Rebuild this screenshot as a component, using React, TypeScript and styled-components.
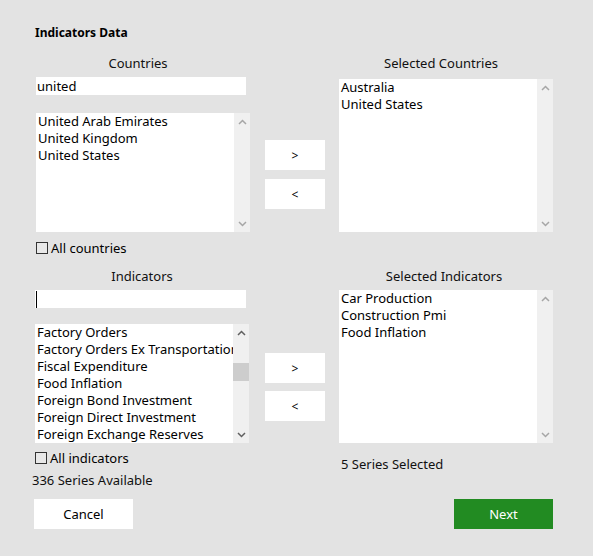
import styled, { createGlobalStyle } from "styled-components";

const GlobalStyle = createGlobalStyle`
  html, body {
    margin: 0;
    padding: 0;
    background: #e3e3e3;
  }
  * {
    box-sizing: border-box;
  }
`;

const Window = styled.div`
  width: 593px;
  height: 556px;
  background: #e3e3e3;
  padding: 25px 40px 0 35px;
  font-family: "Noto Sans", "Open Sans", sans-serif;
  font-size: 13px;
  color: #000;
`;

const Title = styled.div`
  font-weight: 700;
  font-size: 12px;
  height: 16px;
  line-height: 16px;
  margin-bottom: 14px;
`;

const Section = styled.div<{ $top?: number }>`
  display: grid;
  grid-template-columns: 216px 60px 214px;
  column-gap: 14px;
  margin-top: ${(p) => p.$top ?? 0}px;
`;

const Column = styled.div<{ $indent?: number }>`
  display: flex;
  flex-direction: column;
  padding-left: ${(p) => p.$indent ?? 0}px;
`;

const Label = styled.div<{ $width: number }>`
  width: ${(p) => p.$width}px;
  text-align: center;
  height: 16px;
  line-height: 16px;
  color: #111;
`;

const SearchBox = styled.div<{ $width: number; $top: number }>`
  width: ${(p) => p.$width}px;
  height: 18px;
  margin-top: ${(p) => p.$top}px;
  background: #fff;
  line-height: 18px;
  padding-left: 1px;
  display: flex;
  align-items: center;
`;

const Caret = styled.span`
  display: block;
  width: 1px;
  height: 17px;
  background: #000;
`;

const ListBox = styled.div<{ $height: number }>`
  display: flex;
  width: 214px;
  height: ${(p) => p.$height}px;
  background: #fff;
  overflow: hidden;
`;

const Items = styled.div`
  flex: 1;
  min-width: 0;
  overflow: hidden;
`;

const Item = styled.div`
  height: 17px;
  line-height: 17px;
  padding-left: 2px;
  white-space: nowrap;
  overflow: hidden;
`;

const ScrollBar = styled.div`
  width: 16px;
  background: #f0f0f0;
  display: flex;
  flex-direction: column;
`;

const ScrollArrow = styled.div`
  height: 17px;
  display: flex;
  align-items: center;
  justify-content: center;
`;

const Track = styled.div`
  flex: 1;
  position: relative;
`;

const Thumb = styled.div<{ $top: number }>`
  position: absolute;
  left: 0;
  right: 0;
  height: 18px;
  top: ${(p) => p.$top}px;
  background: #cdcdcd;
`;

const MoveButtons = styled.div<{ $top: number; $gap: number }>`
  display: flex;
  flex-direction: column;
  gap: ${(p) => p.$gap}px;
  padding-top: ${(p) => p.$top}px;
`;

const MoveButton = styled.button`
  width: 60px;
  height: 30px;
  border: none;
  background: #fff;
  font-family: inherit;
  font-size: 12px;
  color: #000;
  padding: 0;
`;

const CheckRow = styled.label`
  display: flex;
  align-items: center;
  gap: 3px;
  height: 16px;
  line-height: 16px;
`;

const Box = styled.span`
  display: block;
  width: 12px;
  height: 12px;
  border: 1px solid #333;
  background: #e8e8e8;
`;

const Spacer = styled.div<{ $h: number }>`
  height: ${(p) => p.$h}px;
  flex-shrink: 0;
`;

const Note = styled.div<{ $top: number; $left?: number }>`
  height: 16px;
  line-height: 16px;
  margin-top: ${(p) => p.$top}px;
  margin-left: ${(p) => p.$left ?? 0}px;
  color: #111;
`;

const Footer = styled.div`
  display: flex;
  justify-content: space-between;
  margin-top: 11px;
  margin-left: -1px;
`;

const ActionButton = styled.button<{ $primary?: boolean }>`
  width: 99px;
  height: 30px;
  border: none;
  padding: 0;
  font-family: inherit;
  font-size: 13px;
  background: ${(p) => (p.$primary ? "#228b22" : "#fff")};
  color: ${(p) => (p.$primary ? "#fff" : "#000")};
`;

function Chevron({ up, dark }: { up?: boolean; dark?: boolean }) {
  return (
    <svg width="9" height="6" viewBox="0 0 9 6">
      <path
        d={up ? "M1 5 L4.5 1.5 L8 5" : "M1 1 L4.5 4.5 L8 1"}
        fill="none"
        stroke={dark ? "#606060" : "#a6a6a6"}
        strokeWidth="1.5"
      />
    </svg>
  );
}

function List({
  items,
  height,
  thumbTop,
}: {
  items: string[];
  height: number;
  thumbTop?: number;
}) {
  const dark = thumbTop !== undefined;
  return (
    <ListBox $height={height}>
      <Items>
        {items.map((it) => (
          <Item key={it}>{it}</Item>
        ))}
      </Items>
      <ScrollBar>
        <ScrollArrow>
          <Chevron up dark={dark} />
        </ScrollArrow>
        <Track>{dark && <Thumb $top={thumbTop!} />}</Track>
        <ScrollArrow>
          <Chevron dark={dark} />
        </ScrollArrow>
      </ScrollBar>
    </ListBox>
  );
}

const countries = ["United Arab Emirates", "United Kingdom", "United States"];
const selectedCountries = ["Australia", "United States"];
const indicators = [
  "Factory Orders",
  "Factory Orders Ex Transportation",
  "Fiscal Expenditure",
  "Food Inflation",
  "Foreign Bond Investment",
  "Foreign Direct Investment",
  "Foreign Exchange Reserves",
];
const selectedIndicators = ["Car Production", "Construction Pmi", "Food Inflation"];

export default function App() {
  return (
    <>
      <GlobalStyle />
      <Window>
        <Title>Indicators Data</Title>
        <Section>
          <Column $indent={1}>
            <Label $width={204}>Countries</Label>
            <SearchBox $width={210} $top={6}>
              united
            </SearchBox>
            <Spacer $h={18} />
            <List items={countries} height={119} />
            <Spacer $h={8} />
            <CheckRow>
              <Box />
              All countries
            </CheckRow>
          </Column>
          <MoveButtons $top={85} $gap={9}>
            <MoveButton>&gt;</MoveButton>
            <MoveButton>&lt;</MoveButton>
          </MoveButtons>
          <Column>
            <Label $width={204}>Selected Countries</Label>
            <Spacer $h={8} />
            <List items={selectedCountries} height={153} />
          </Column>
        </Section>
        <Section $top={12}>
          <Column>
            <Label $width={214}>Indicators</Label>
            <SearchBox $width={211} $top={6}>
              <Caret />
            </SearchBox>
            <Spacer $h={16} />
            <List items={indicators} height={119} thumbTop={22} />
            <Spacer $h={7} />
            <CheckRow>
              <Box />
              All indicators
            </CheckRow>
            <Note $top={6} $left={-3}>
              336 Series Available
            </Note>
          </Column>
          <MoveButtons $top={85} $gap={8}>
            <MoveButton>&gt;</MoveButton>
            <MoveButton>&lt;</MoveButton>
          </MoveButtons>
          <Column>
            <Label $width={210}>Selected Indicators</Label>
            <Spacer $h={6} />
            <List items={selectedIndicators} height={153} />
            <Note $top={13} $left={2}>
              5 Series Selected
            </Note>
          </Column>
        </Section>
        <Footer>
          <ActionButton>Cancel</ActionButton>
          <ActionButton $primary>Next</ActionButton>
        </Footer>
      </Window>
    </>
  );
}
